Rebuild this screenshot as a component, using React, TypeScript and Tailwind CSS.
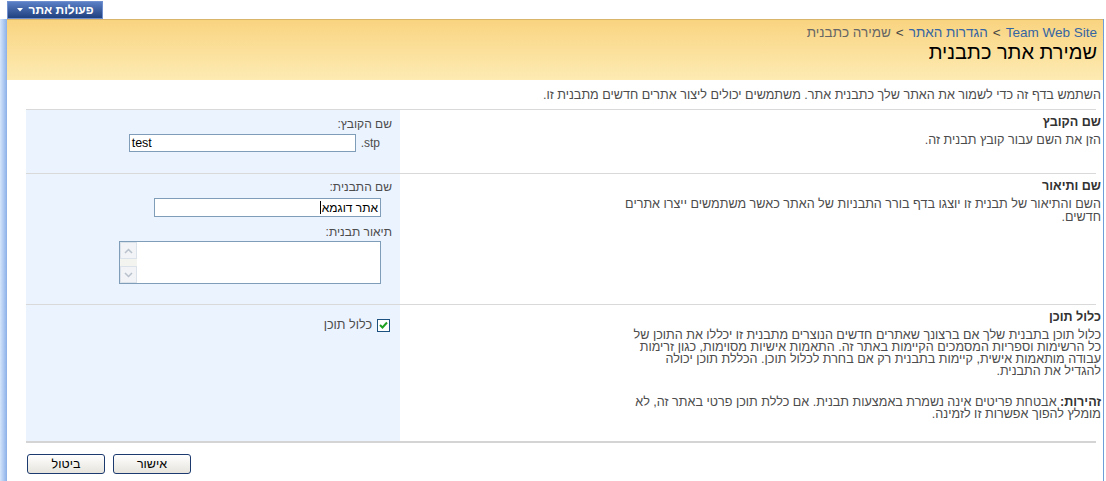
import type { ReactNode } from "react";

// Section row: description on the right, form controls on the left (RTL page)
function FormSection({
  title,
  children,
  controls,
  height,
}: {
  title: string;
  children: ReactNode;
  controls: ReactNode;
  height: string;
}) {
  return (
    <div className={`flex ${height}`}>
      <div className="flex-1 pt-[5px] pl-[20px]">
        <div className="text-[12.6px] leading-[14px] font-bold text-[#333]">{title}</div>
        <div className="mt-[5px] text-[12.6px] leading-[13px] text-[#4c4c4c]">{children}</div>
      </div>
      <div className="w-[374px] bg-[#ebf3ff] pr-[8px]">{controls}</div>
    </div>
  );
}

function SectionLine({ thick = false }: { thick?: boolean }) {
  return (
    <div
      className={
        thick
          ? "ml-0 mr-[5px] h-[2px] bg-[#d4d4d4]"
          : "ml-0 mr-[5px] h-px bg-[#d9d9d9]"
      }
    />
  );
}

function FakeTextarea() {
  return (
    <div className="flex h-[43px] w-[262px] border border-[#7f9db9] bg-white" dir="ltr">
      <div className="flex w-[17px] flex-col justify-between bg-[#f3f3ef]">
        <div className="flex h-[17px] items-center justify-center border border-[#dbe2ea] bg-[#f1f3f6]">
          <svg width="9" height="6" viewBox="0 0 9 6">
            <path d="M1 5 L4.5 1.5 L8 5" fill="none" stroke="#b9c1cc" strokeWidth="1.5" />
          </svg>
        </div>
        <div className="flex h-[17px] items-center justify-center border border-[#dbe2ea] bg-[#f1f3f6]">
          <svg width="9" height="6" viewBox="0 0 9 6">
            <path d="M1 1 L4.5 4.5 L8 1" fill="none" stroke="#b9c1cc" strokeWidth="1.5" />
          </svg>
        </div>
      </div>
      <div className="flex-1" />
    </div>
  );
}

function XpButton({ label }: { label: string }) {
  return (
    <button
      type="button"
      className="h-[20px] w-[78px] rounded-[3px] border border-[#1c3a6e] bg-gradient-to-b from-white to-[#e6e4dc] text-[12.5px] leading-[18px] text-black"
    >
      {label}
    </button>
  );
}

export default function App() {
  return (
    <div className="relative h-[481px] w-[1106px] overflow-hidden bg-white font-['Liberation_Sans',Arial,sans-serif] text-[12px] text-[#4c4c4c]">
      {/* Site actions strip */}
      <div className="flex h-[19px] items-start pl-[7px] pt-[1px]">
        <div
          dir="rtl"
          className="flex h-[18px] w-[96px] items-center justify-center gap-[6px] border border-[#6f8fce] bg-gradient-to-b from-[#5b7fc6] to-[#20417f] text-[12px] font-bold text-white"
        >
          <span>פעולות אתר</span>
          <svg width="6" height="4" viewBox="0 0 6 4">
            <path d="M0 0 H6 L3 3.5 Z" fill="#fff" />
          </svg>
        </div>
      </div>

      <div className="flex h-[462px]">
        <div className="w-[7px] bg-gradient-to-r from-[#d5e5fb] to-[#8bb0e8]" />

        <div className="w-[1097px] border-r border-[#6f9dd9]">
          {/* Title area */}
          <div
            dir="rtl"
            className="h-[61px] border-t border-[#d8b56a] bg-gradient-to-b from-[#f9d480] to-[#fdebb3] pr-[6px] pt-[5px]"
          >
            <div className="text-[13.5px] leading-[15px] text-[#555]">
              <span className="text-[#3565a3]">Team Web Site</span>
              <span className="mx-[5px] text-[#444]">&gt;</span>
              <span className="text-[#3565a3]">הגדרות האתר</span>
              <span className="mx-[5px] text-[#444]">&gt;</span>
              <span className="text-[#666]">שמירה כתבנית</span>
            </div>
            <div className="text-[20px] leading-[24px] text-black">שמירת אתר כתבנית</div>
          </div>

          {/* Form body */}
          <div dir="rtl" className="pl-[19px] pr-[2px] pt-[8px]">
            <div className="text-[12.6px] leading-[14px]">
              השתמש בדף זה כדי לשמור את האתר שלך כתבנית אתר. משתמשים יכולים ליצור אתרים חדשים מתבנית זו.
            </div>

            <div className="mt-[7px]">
              <SectionLine />
              <FormSection
                title="שם הקובץ"
                height="h-[63px]"
                controls={
                  <div className="pt-[7px]">
                    <div className="leading-[14px]">שם הקובץ:</div>
                    <div className="mr-[12px] mt-[3px] flex items-center gap-[5px]">
                      <span dir="ltr">.stp</span>
                      <div
                        dir="ltr"
                        className="h-[18px] w-[227px] border border-[#7f9db9] bg-white pl-[2px] text-[12.5px] leading-[16px] text-black"
                      >
                        test
                      </div>
                    </div>
                  </div>
                }
              >
                הזן את השם עבור קובץ תבנית זה.
              </FormSection>

              <SectionLine />
              <FormSection
                title="שם ותיאור"
                height="h-[130px]"
                controls={
                  <div className="pt-[6px]">
                    <div className="leading-[14px]">שם התבנית:</div>
                    <div className="mr-[11px] mt-[4px] flex h-[19px] w-[227px] items-center border border-[#7f9db9] bg-white pr-[2px] text-[12px] text-black">
                      <span>אתר דוגמא</span>
                      <span className="mr-[1px] h-[13px] w-px bg-black" />
                    </div>
                    <div className="mt-[8px] leading-[14px]">תיאור תבנית:</div>
                    <div className="mr-[11px] mt-[2px]">
                      <FakeTextarea />
                    </div>
                  </div>
                }
              >
                השם והתיאור של תבנית זו יוצגו בדף בורר התבניות של האתר כאשר משתמשים ייצרו אתרים
                <br />
                חדשים.
              </FormSection>

              <SectionLine />
              <FormSection
                title="כלול תוכן"
                height="h-[136px]"
                controls={
                  <div className="flex items-center gap-[5px] pr-[2px] pt-[13px]">
                    <div className="flex h-[13px] w-[13px] items-center justify-center border border-[#1c5180] bg-white">
                      <svg width="9" height="8" viewBox="0 0 9 8">
                        <path d="M1 4 L3.5 6.5 L8 1.5" fill="none" stroke="#21a121" strokeWidth="2" />
                      </svg>
                    </div>
                    <span className="text-[12.6px] leading-[14px]">כלול תוכן</span>
                  </div>
                }
              >
                <p className="leading-[12px]">
                  כלול תוכן בתבנית שלך אם ברצונך שאתרים חדשים הנוצרים מתבנית זו יכללו את התוכן של
                  <br />
                  כל הרשימות וספריות המסמכים הקיימות באתר זה. התאמות אישיות מסוימות, כגון זרימות
                  <br />
                  עבודה מותאמות אישית, קיימות בתבנית רק אם בחרת לכלול תוכן. הכללת תוכן יכולה
                  <br />
                  להגדיל את התבנית.
                </p>
                <p className="mt-[19px] leading-[12px]">
                  <span className="font-bold text-[#333]">זהירות:</span> אבטחת פריטים אינה נשמרת באמצעות תבנית. אם כללת תוכן פרטי באתר זה, לא
                  <br />
                  מומלץ להפוך אפשרות זו לזמינה.
                </p>
              </FormSection>
              <SectionLine thick />
            </div>

            <div className="mt-[11px] flex justify-end gap-[8px] pl-[1px]">
              <XpButton label="אישור" />
              <XpButton label="ביטול" />
            </div>
          </div>
        </div>
      </div>
    </div>
  );
}
